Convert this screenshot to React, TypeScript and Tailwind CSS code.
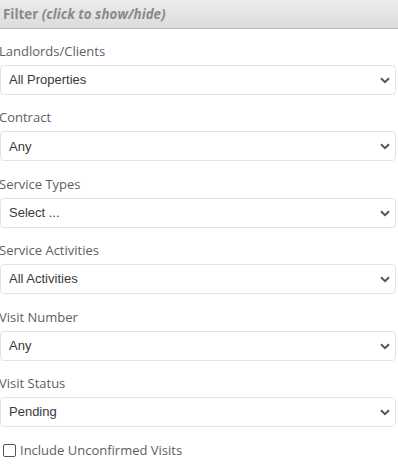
import React from 'react';

const filters = [
  { label: 'Landlords/Clients', value: 'All Properties' },
  { label: 'Contract', value: 'Any' },
  { label: 'Service Types', value: 'Select ...' },
  { label: 'Service Activities', value: 'All Activities' },
  { label: 'Visit Number', value: 'Any' },
  { label: 'Visit Status', value: 'Pending' },
];

const Chevron = () => (
  <svg width="10" height="7" viewBox="0 0 10 7" className="pointer-events-none absolute right-[6px] top-[12px]">
    <path d="M1 1.2 L5 5.2 L9 1.2" fill="none" stroke="#555" strokeWidth="2" />
  </svg>
);

export default function App() {
  return (
    <div className="w-[398px] h-[469px] bg-white overflow-hidden" style={{ fontFamily: '"Open Sans", sans-serif' }}>
      <div className="h-[29px] flex items-center px-[3px] bg-gradient-to-b from-[#ececec] to-[#dcdcdc] border-b border-[#b9b9b9]">
        <span className="text-[13.4px] font-bold text-[#8a8a8a]">
          Filter <i>(click to show/hide)</i>
        </span>
      </div>
      <div className="pt-[13px] pl-0 pr-[2px]">
        {filters.map((f) => (
          <div key={f.label} className="mb-[13.4px]">
            <div className="text-[13px] leading-[18px] text-[#606060] ml-[-1px] mb-[5px]">{f.label}</div>
            <div className="relative">
              <select
                defaultValue={f.value}
                className="appearance-none w-full h-[30px] border border-[#e3e3e3] rounded-[4px] bg-white pl-[8px] text-[13px] text-[#3a3a3a] outline-none"
                style={{ fontFamily: '"Liberation Sans", Arial, sans-serif' }}
              >
                <option>{f.value}</option>
              </select>
              <Chevron />
            </div>
          </div>
        ))}
        <label className="flex items-center gap-[4px] pl-[3px] pt-[1px]">
          <span className="w-[13px] h-[13px] border border-[#555] rounded-[2px] bg-white" />
          <span className="text-[13px] text-[#606060] leading-[18px]">Include Unconfirmed Visits</span>
        </label>
      </div>
    </div>
  );
}
